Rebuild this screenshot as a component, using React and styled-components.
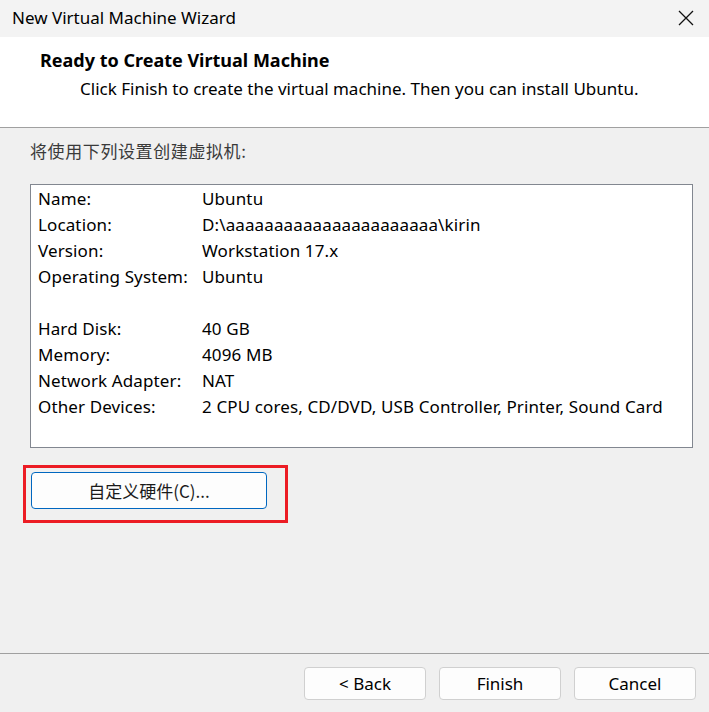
import React from "react";
import styled, { createGlobalStyle } from "styled-components";

const GlobalStyle = createGlobalStyle`
  html, body {
    margin: 0;
    padding: 0;
    background: #f0f0f0;
  }
  body {
    font-family: "Noto Sans", "Noto Sans CJK SC", sans-serif;
    color: #000;
  }
  * {
    box-sizing: border-box;
  }
`;

const Window = styled.div`
  width: 709px;
  height: 712px;
  display: flex;
  flex-direction: column;
  background: #f0f0f0;
  overflow: hidden;
`;

const TitleBar = styled.div`
  height: 37px;
  flex-shrink: 0;
  display: flex;
  align-items: center;
  justify-content: space-between;
  padding: 0 0 2px 12px;
  background: #f3f3f3;
  font-size: 17px;
`;

const CloseButton = styled.div`
  width: 46px;
  height: 37px;
  display: flex;
  align-items: center;
  justify-content: center;
`;

const Header = styled.div`
  height: 91px;
  flex-shrink: 0;
  background: #fff;
  border-bottom: 1px solid #a0a0a0;
  padding: 11px 0 0 40px;
`;

const HeaderTitle = styled.div`
  font-weight: 700;
  font-size: 18px;
  line-height: 24px;
`;

const HeaderSub = styled.div`
  font-size: 17px;
  line-height: 24px;
  margin: 5px 0 0 40px;
`;

const Body = styled.div`
  flex: 1;
  padding: 10px 16px 0 30px;
  display: flex;
  flex-direction: column;
`;

const Intro = styled.div`
  font-size: 17px;
  line-height: 26px;
  letter-spacing: 0.6px;
  color: #3a3a3a;
  font-family: "Noto Sans CJK SC", sans-serif;
`;

const SummaryBox = styled.div`
  margin-top: 20px;
  height: 264px;
  flex-shrink: 0;
  background: #fff;
  border: 1px solid #828790;
  padding: 0 0 0 7px;
`;

const Row = styled.div`
  display: grid;
  grid-template-columns: 164px 1fr;
  height: 26px;
  align-items: center;
  font-size: 17px;
  letter-spacing: 0.12px;
  white-space: nowrap;
`;

const Highlight = styled.div`
  align-self: flex-start;
  margin: 17px 0 0 -7px;
  padding: 4px 18px 11px 5px;
  border: 3px solid #ec1c24;
`;

const CustomizeButton = styled.button`
  width: 236px;
  height: 37px;
  background: #fdfdfd;
  border: 1px solid #0067c0;
  border-radius: 4px;
  font-family: "Noto Sans CJK SC", sans-serif;
  font-size: 17px;
  color: #1a1a1a;
  display: block;
  padding: 0;
`;

const Footer = styled.div`
  height: 59px;
  flex-shrink: 0;
  border-top: 1px solid #a0a0a0;
  display: flex;
  justify-content: flex-end;
  align-items: flex-start;
  gap: 13px;
  padding: 13px 13px 0 0;
`;

const FooterButton = styled.button`
  width: 122px;
  height: 33px;
  background: #fdfdfd;
  border: 1px solid #d0d0d0;
  border-radius: 4px;
  font-family: "Noto Sans", sans-serif;
  font-size: 17px;
  color: #000;
  padding: 0;
`;

const rows = [
  ["Name:", "Ubuntu"],
  ["Location:", "D:\\aaaaaaaaaaaaaaaaaaaaaa\\kirin"],
  ["Version:", "Workstation 17.x"],
  ["Operating System:", "Ubuntu"],
  ["", ""],
  ["Hard Disk:", "40 GB"],
  ["Memory:", "4096 MB"],
  ["Network Adapter:", "NAT"],
  ["Other Devices:", "2 CPU cores, CD/DVD, USB Controller, Printer, Sound Card"],
];

export default function App() {
  return (
    <Window>
      <GlobalStyle />
      <TitleBar>
        <span>New Virtual Machine Wizard</span>
        <CloseButton>
          <svg width="16" height="16" viewBox="0 0 16 16">
            <path d="M1 1L15 15M15 1L1 15" stroke="#111" strokeWidth="1.3" />
          </svg>
        </CloseButton>
      </TitleBar>
      <Header>
        <HeaderTitle>Ready to Create Virtual Machine</HeaderTitle>
        <HeaderSub>
          Click Finish to create the virtual machine. Then you can install Ubuntu.
        </HeaderSub>
      </Header>
      <Body>
        <Intro>将使用下列设置创建虚拟机:</Intro>
        <SummaryBox>
          {rows.map(([k, v], i) => (
            <Row key={i}>
              <span>{k}</span>
              <span>{v}</span>
            </Row>
          ))}
        </SummaryBox>
        <Highlight>
          <CustomizeButton>自定义硬件(C)...</CustomizeButton>
        </Highlight>
      </Body>
      <Footer>
        <FooterButton>&lt; Back</FooterButton>
        <FooterButton>Finish</FooterButton>
        <FooterButton>Cancel</FooterButton>
      </Footer>
    </Window>
  );
}
